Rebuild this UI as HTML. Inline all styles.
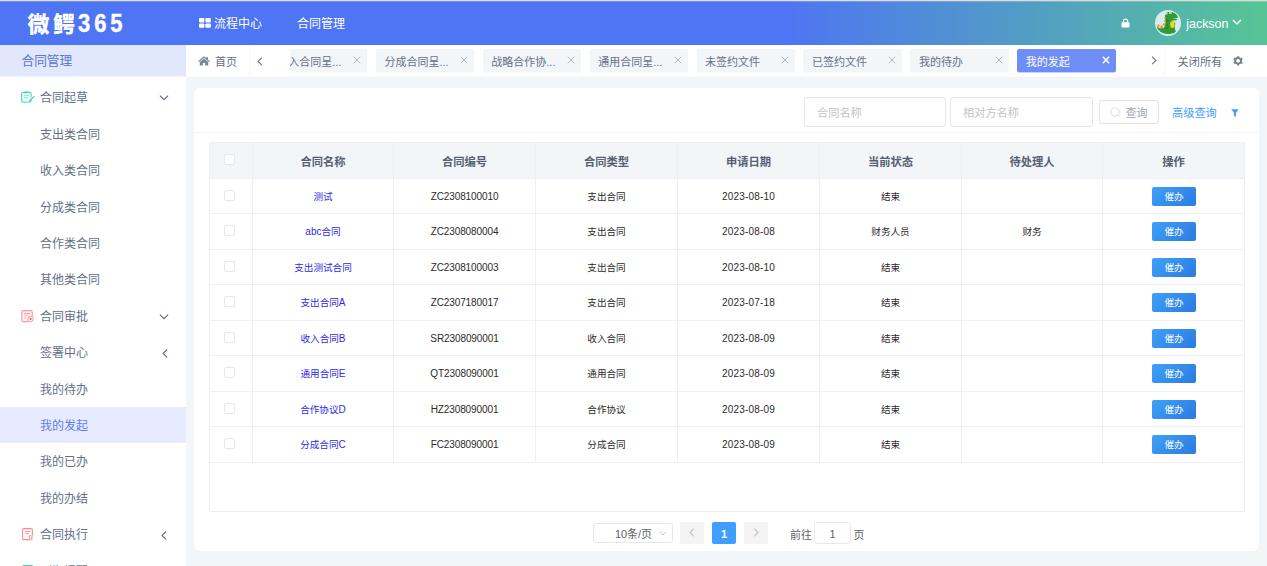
<!DOCTYPE html>
<html lang="zh-CN">
<head>
<meta charset="utf-8">
<title>微鳄365 - 合同管理</title>
<style>
*{box-sizing:border-box;margin:0;padding:0}
html,body{width:1267px;height:566px;overflow:hidden;background:#f3f6f9}
body{font-family:"Liberation Sans","Noto Sans CJK SC",sans-serif;font-size:12px;color:#606266;position:relative}
.abs{position:absolute}
#topline{left:0;top:0;width:1267px;height:1px;background:#dddcdb;box-shadow:0 1px 0 rgba(221,220,219,0.3)}
#header{left:0;top:1px;width:1267px;height:44px;background:linear-gradient(90deg,#4e75f3 0%,#4e75f3 62%,#56c596 100%);color:#fff}
#logo{left:27.5px;top:2px;height:44px;line-height:44px;font-size:22px;font-weight:900;letter-spacing:3.5px;color:#fff;white-space:nowrap}
#lg{display:inline-block;transform:scaleY(1.15);transform-origin:50% 72.5%;letter-spacing:3.9px;-webkit-text-stroke:0.35px #fff;margin-left:-0.5px}
.nav{top:1px;height:44px;line-height:44px;font-size:12px;color:#fff;white-space:nowrap}
#side{left:0;top:45px;width:186px;height:521px;background:#fff;overflow:hidden}
#sidetitle{left:0;top:0;width:186px;height:31px;border-bottom:0;box-shadow:0 1px 0 #f0f3ff;line-height:32.6px;background:#e1e7fd;color:#5877d6;font-size:12.7px;padding-left:21.5px}
.mi{left:0;width:186px;height:36px;line-height:39px;font-size:12px;color:#636f86;white-space:nowrap}
.mi .t{position:absolute;left:40px;top:0}
.mi svg.ic{position:absolute;left:21px}
.mi svg.ar{position:absolute}
.mi.act{background:#e6ebff;color:#5f7bf5}
#tabs{left:186px;top:45px;width:1081px;height:32px;background:linear-gradient(#fff 0,#fff 31px,#f8fafc 31px,#f8fafc 32px)}
.tab{top:4px;height:23px;box-shadow:0 1px 0 #f9fafc;line-height:26px;background:#f3f6f9;border-radius:2px;font-size:11px;color:#667085;white-space:nowrap;overflow:hidden}
.tab .x{position:absolute;right:6.2px;top:7px}
.tab.on{background:#6e8df6;color:#fff;box-shadow:0 1px 0 #c5d1fb}
#cardbg{left:194px;top:88px;width:1065px;height:463px;background:#fff;border-radius:6px}
#card{left:193px;top:88px;width:1066px;height:463px}
#sbar{left:0;top:0;width:1066px;height:45px;border-bottom:1px solid #f2f4f8}
.inp{top:9px;height:30px;width:143px;border:1px solid #e4e7ed;border-radius:3px;background:#fff;line-height:30px;font-size:11.2px;color:#c0c4cc;padding-left:12px}
table{border-collapse:collapse;table-layout:fixed;position:absolute;left:16px;top:54px;width:1035px}
th,td{border:1px solid #eef0f6;text-align:center;font-weight:normal;overflow:hidden;white-space:nowrap}
th{height:36px;background:#f3f6f9;color:#566072;font-size:11.3px;font-weight:bold}
td{height:35px;font-size:10px;letter-spacing:-0.1px;color:#2b2b2b}
tr:nth-child(odd) td{height:36px}
td.c{letter-spacing:0;font-size:9.6px;padding-bottom:1px}
td.lk{color:#2e2be4;letter-spacing:0;font-size:9.6px;padding-bottom:1px}
.cb{display:inline-block;width:11px;height:11px;border:1px solid #e6e8ef;border-radius:2px;background:#fff;vertical-align:middle;position:relative;top:-1.4px;left:-1.5px}
th .cb{top:-2px}
.l{font-size:10px}
td.d{letter-spacing:0.2px}
.btn{display:inline-block;width:44px;height:19px;line-height:20px;border-radius:2px;background:linear-gradient(135deg,#3fa0f8,#2b7be0);color:#fff;font-size:9.6px;letter-spacing:0;vertical-align:middle;margin-left:1px}
</style>
</head>
<body>
<div id="header" class="abs">
  <div id="logo" class="abs">微鳄<span id="lg">365</span></div>
  <svg class="abs" style="left:199px;top:17px" width="12" height="10" viewBox="0 0 12 10"><rect x="0" y="0" width="5.4" height="4.4" rx="0.8" fill="#fff"/><rect x="6.4" y="0" width="5.4" height="4.4" rx="0.8" fill="#fff"/><rect x="0" y="5.4" width="5.4" height="4.4" rx="0.8" fill="#fff"/><rect x="6.4" y="5.4" width="5.4" height="4.4" rx="0.8" fill="#fff"/></svg>
  <div class="abs nav" style="left:214px">流程中心</div>
  <div class="abs nav" style="left:297px">合同管理</div>
  <svg class="abs" style="left:1121px;top:16.8px" width="9" height="10" viewBox="0 0 9 10"><path d="M2.4 4.6V3.2a2.1 2.1 0 0 1 4.2 0V4.6" fill="none" stroke="#fff" stroke-width="1.3"/><rect x="0.5" y="4.2" width="8" height="5.3" rx="0.7" fill="#fff"/></svg>
  <svg class="abs" style="left:1155px;top:9.4px" width="26" height="26" viewBox="0 0 26 26"><circle cx="13" cy="13" r="13" fill="#d6edef"/><path d="M10 4.5C10 2.8 12 1.9 14 2.1 17.2 1.6 21.2 3 22.7 6.4L22.5 7.9 17 8.2 21.9 9 21.5 10.3C19.5 10.7 17.8 10.6 16.9 10.5 18.6 11.8 20.6 13 20.5 14L19.6 15.2C20 18 19.6 20 21 21.3L19.2 23 15 23.9C11 24.6 6 23 3.5 20 2.5 18.8 2 17.5 2.2 16.4 4 18.5 7 19 9 17.4 10.6 16 10.5 12 10.2 9Z" fill="#2f9b33"/><ellipse cx="17.3" cy="14.6" rx="2.2" ry="3.5" fill="#f6d21a"/><circle cx="3.4" cy="15.7" r="1.2" fill="#f58b1e"/><circle cx="6.6" cy="16.9" r="1.3" fill="#f58b1e"/><circle cx="9" cy="14.4" r="1.2" fill="#f58b1e"/><circle cx="10" cy="11.3" r="1" fill="#f58b1e"/><circle cx="10" cy="8" r="0.8" fill="#f58b1e"/><circle cx="11.4" cy="3.8" r="1.2" fill="#fff"/><circle cx="15.4" cy="3" r="1.2" fill="#fff"/><circle cx="11.6" cy="3.9" r="0.5" fill="#334"/><circle cx="15.6" cy="3.1" r="0.5" fill="#334"/><path d="M12 9.5l0.2 2M12.2 13.5l0 2M11.6 17.5l-0.4 1.5" stroke="#1d5e22" stroke-width="0.8"/></svg>
  <div class="abs nav" style="left:1186.3px;top:0.5px;font-size:12.4px">jackson</div>
  <svg class="abs" style="left:1232px;top:18.3px" width="10" height="7" viewBox="0 0 10 7"><path d="M0.9 0.9l4 4 4-4" fill="none" stroke="#fff" stroke-width="1.4"/></svg>
</div>
<div id="topline" class="abs"></div>

<div id="side" class="abs">
  <div id="sidetitle" class="abs">合同管理</div>
  <div class="abs mi" style="top:34px"><svg class="ic" style="top:12px" width="14" height="13" viewBox="0 0 14 13"><rect x="0.6" y="1.3" width="9.6" height="9.9" rx="1.6" fill="#eafaf6" stroke="#62d9c2" stroke-width="1.2"/><rect x="3" y="0.6" width="4.8" height="1.5" fill="#4fcdb4"/><path d="M2.9 4.6h5M2.9 6.8h4" stroke="#8fe6d5" stroke-width="1"/><path d="M6.3 11.8l0.5-2.3 5.5-5.5 1.5 1.5-5.4 5.6z" fill="#fff"/><path d="M7.3 11.2l0.3-1.4 5-5 1 1-4.9 5z" fill="#52d3bb"/></svg><span class="t">合同起草</span><svg class="ar" style="left:159px;top:16px" width="10" height="6" viewBox="0 0 10 6"><path d="M0.9 0.6L5 4.7 9.1 0.6" fill="none" stroke="#5c6a82" stroke-width="1.15"/></svg></div>
  <div class="abs mi" style="top:71px"><span class="t">支出类合同</span></div>
  <div class="abs mi" style="top:107px"><span class="t">收入类合同</span></div>
  <div class="abs mi" style="top:144px"><span class="t">分成类合同</span></div>
  <div class="abs mi" style="top:180px"><span class="t">合作类合同</span></div>
  <div class="abs mi" style="top:216px"><span class="t">其他类合同</span></div>
  <div class="abs mi" style="top:253px"><svg class="ic" style="top:12px" width="14" height="13" viewBox="0 0 14 13"><rect x="0.9" y="0.6" width="10.4" height="11" rx="1.6" fill="#fff5f5" stroke="#ff9a9a" stroke-width="1.2"/><path d="M3.2 3.6h6" stroke="#ff9a9a" stroke-width="1.2"/><path d="M3.2 5.8h3.2M3.2 8h2" stroke="#ffaaaa" stroke-width="1"/><circle cx="9.6" cy="8.9" r="3.3" fill="#fff"/><circle cx="9.6" cy="8.9" r="2.7" fill="#fff" stroke="#ff8f8f" stroke-width="1"/><circle cx="9.6" cy="8.9" r="1.1" fill="#f86060"/></svg><span class="t">合同审批</span><svg class="ar" style="left:159px;top:16px" width="10" height="6" viewBox="0 0 10 6"><path d="M0.9 0.6L5 4.7 9.1 0.6" fill="none" stroke="#5c6a82" stroke-width="1.15"/></svg></div>
  <div class="abs mi" style="top:289px"><span class="t">签署中心</span><svg class="ar" style="left:162px;top:14.6px" width="6" height="10" viewBox="0 0 6 10"><path d="M5.2 0.5L1.1 4.4 5.2 8.3" fill="none" stroke="#5c6a82" stroke-width="1.1"/></svg></div>
  <div class="abs mi" style="top:326px"><span class="t">我的待办</span></div>
  <div class="abs mi act" style="top:362px"><span class="t">我的发起</span></div>
  <div class="abs mi" style="top:398px"><span class="t">我的已办</span></div>
  <div class="abs mi" style="top:435px"><span class="t">我的办结</span></div>
  <div class="abs mi" style="top:471px"><svg class="ic" style="top:12px;left:22px" width="12" height="13" viewBox="0 0 12 13"><rect x="0.6" y="0.6" width="9.8" height="11" rx="1.2" fill="#fff" stroke="#ff8c8c" stroke-width="1.1"/><path d="M2.6 3.6h6M2.6 5.7h4.4" stroke="#ff9a9a" stroke-width="1"/><circle cx="8.8" cy="9.2" r="2.3" fill="#fff"/><circle cx="8.6" cy="9" r="1.5" fill="#fff" stroke="#ff8c8c" stroke-width="1"/></svg><span class="t">合同执行</span><svg class="ar" style="left:161px;top:14.6px" width="6" height="10" viewBox="0 0 6 10"><path d="M5.2 0.5L1.1 4.4 5.2 8.3" fill="none" stroke="#5c6a82" stroke-width="1.1"/></svg></div>
  <div class="abs mi" style="top:508px"><svg class="ic" style="top:12px;left:22px" width="12" height="13" viewBox="0 0 12 13"><rect x="0.3" y="0" width="11" height="12" rx="1.6" fill="#45d6bd"/></svg><span class="t">到期提醒</span></div>
</div>

<div id="tabs" class="abs">
  <svg class="abs" style="left:12px;top:10.5px" width="12" height="10" viewBox="0 0 12 10"><path d="M6 0.2L0.1 5.2l0.8 0.9L6 1.9l5.1 4.2 0.8-0.9L9.9 3.5V0.9H8.4v1.3z" fill="#7d8590"/><path d="M1.8 6.1L6 2.8l4.2 3.3V9.6H7.1V6.9H4.9V9.6H1.8z" fill="#7d8590"/></svg>
  <div class="abs tt" style="left:29px;top:0;line-height:34px;font-size:11px;color:#667085">首页</div>
  <div class="abs" style="left:63px;top:0;width:1px;height:31px;background:#f7f8fa"></div>
  <svg class="abs" style="left:71px;top:11.5px" width="6" height="9" viewBox="0 0 6 9"><path d="M4.9 0.6L1.1 4.4l3.8 3.8" fill="none" stroke="#6c7480" stroke-width="1.15"/></svg>
  <div class="abs tab" style="left:103.7px;width:77.8px"><span style="margin-left:-1.5px">入合同呈...</span><svg class="x" width="8" height="8" viewBox="0 0 8 8"><path d="M0.8 0.8l6.4 6.4M7.2 0.8L0.8 7.2" stroke="#b3b8bf" stroke-width="1" fill="none"/></svg></div>
  <div class="abs tab" style="left:189.8px;width:98.6px"><span style="margin-left:8.6px">分成合同呈...</span><svg class="x" width="8" height="8" viewBox="0 0 8 8"><path d="M0.8 0.8l6.4 6.4M7.2 0.8L0.8 7.2" stroke="#b3b8bf" stroke-width="1" fill="none"/></svg></div>
  <div class="abs tab" style="left:296.7px;width:98.6px"><span style="margin-left:8.6px">战略合作协...</span><svg class="x" width="8" height="8" viewBox="0 0 8 8"><path d="M0.8 0.8l6.4 6.4M7.2 0.8L0.8 7.2" stroke="#b3b8bf" stroke-width="1" fill="none"/></svg></div>
  <div class="abs tab" style="left:403.6px;width:98.6px"><span style="margin-left:8.6px">通用合同呈...</span><svg class="x" width="8" height="8" viewBox="0 0 8 8"><path d="M0.8 0.8l6.4 6.4M7.2 0.8L0.8 7.2" stroke="#b3b8bf" stroke-width="1" fill="none"/></svg></div>
  <div class="abs tab" style="left:510.5px;width:98.6px"><span style="margin-left:8.6px">未签约文件</span><svg class="x" width="8" height="8" viewBox="0 0 8 8"><path d="M0.8 0.8l6.4 6.4M7.2 0.8L0.8 7.2" stroke="#b3b8bf" stroke-width="1" fill="none"/></svg></div>
  <div class="abs tab" style="left:617.4px;width:98.6px"><span style="margin-left:8.6px">已签约文件</span><svg class="x" width="8" height="8" viewBox="0 0 8 8"><path d="M0.8 0.8l6.4 6.4M7.2 0.8L0.8 7.2" stroke="#b3b8bf" stroke-width="1" fill="none"/></svg></div>
  <div class="abs tab" style="left:724.3px;width:98.6px"><span style="margin-left:8.6px">我的待办</span><svg class="x" width="8" height="8" viewBox="0 0 8 8"><path d="M0.8 0.8l6.4 6.4M7.2 0.8L0.8 7.2" stroke="#b3b8bf" stroke-width="1" fill="none"/></svg></div>
  <div class="abs tab on" style="left:831.2px;width:98.6px"><span style="margin-left:8.6px">我的发起</span><svg class="x" width="8" height="8" viewBox="0 0 8 8"><path d="M0.8 0.8l6.4 6.4M7.2 0.8L0.8 7.2" stroke="#fff" stroke-width="1.5" fill="none"/></svg></div>
  <svg class="abs" style="left:964.7px;top:11px" width="6" height="9" viewBox="0 0 6 9"><path d="M1.1 0.6L4.9 4.4 1.1 8.2" fill="none" stroke="#6c7480" stroke-width="1.15"/></svg>
  <div class="abs" style="left:978px;top:0;width:1px;height:31px;background:#f7f8fa"></div>
  <div class="abs tt" style="left:991.5px;top:0;line-height:34px;font-size:11.2px;color:#667085">关闭所有</div>
  <svg class="abs" style="left:1047px;top:11px" width="10.2" height="9.6" viewBox="0 0 11 11" preserveAspectRatio="none"><circle cx="5.5" cy="5.5" r="3.2" fill="none" stroke="#7a828e" stroke-width="2.2"/><path d="M5.5 0.2v2M5.5 8.8v2M0.9 2.8l1.8 1M8.3 7.2l1.8 1M0.9 8.2l1.8-1M8.3 3.8l1.8-1" stroke="#7a828e" stroke-width="2.2"/></svg>
</div>

<div id="cardbg" class="abs"></div>
<div id="card" class="abs">
  <div id="sbar" class="abs">
    <div class="abs inp" style="left:611px;width:142px">合同名称</div>
    <div class="abs inp" style="left:757px">相对方名称</div>
    <div class="abs" style="left:906px;top:12px;width:60px;height:24px;border:1px solid #ebdedb;border-radius:3px;line-height:25px;font-size:11px;color:#a3a7ae;padding-left:25.5px">查询</div>
    <svg class="abs" style="left:917px;top:19px" width="11" height="11" viewBox="0 0 11 11"><circle cx="5" cy="5" r="4.2" fill="none" stroke="#e6d8d3" stroke-width="1"/><path d="M8 8l2 2" stroke="#e6d8d3" stroke-width="1"/></svg>
    <div class="abs" style="left:979px;top:2px;line-height:46px;font-size:11.2px;color:#409eff">高级查询</div>
    <svg class="abs" style="left:1037.5px;top:21px" width="8" height="8" viewBox="0 0 8 8"><path d="M0.2 0.3h7.6L5 3.8V7.8L3 6.7V3.8z" fill="#409eff"/></svg>
  </div>
  <table>
    <colgroup><col style="width:43px"><col style="width:141px"><col style="width:142px"><col style="width:142px"><col style="width:142px"><col style="width:142px"><col style="width:141px"><col style="width:142px"></colgroup>
    <tr><th><span class="cb"></span></th><th>合同名称</th><th>合同编号</th><th>合同类型</th><th>申请日期</th><th>当前状态</th><th>待处理人</th><th>操作</th></tr>
    <tr><td><span class="cb"></span></td><td class="lk">测试</td><td>ZC2308100010</td><td class="c">支出合同</td><td class="d">2023-08-10</td><td class="c">结束</td><td></td><td><span class="btn">催办</span></td></tr>
    <tr><td><span class="cb"></span></td><td class="lk"><span class="l">abc</span>合同</td><td>ZC2308080004</td><td class="c">支出合同</td><td class="d">2023-08-08</td><td class="c">财务人员</td><td class="c">财务</td><td><span class="btn">催办</span></td></tr>
    <tr><td><span class="cb"></span></td><td class="lk">支出测试合同</td><td>ZC2308100003</td><td class="c">支出合同</td><td class="d">2023-08-10</td><td class="c">结束</td><td></td><td><span class="btn">催办</span></td></tr>
    <tr><td><span class="cb"></span></td><td class="lk">支出合同<span class="l">A</span></td><td>ZC2307180017</td><td class="c">支出合同</td><td class="d">2023-07-18</td><td class="c">结束</td><td></td><td><span class="btn">催办</span></td></tr>
    <tr><td><span class="cb"></span></td><td class="lk">收入合同<span class="l">B</span></td><td>SR2308090001</td><td class="c">收入合同</td><td class="d">2023-08-09</td><td class="c">结束</td><td></td><td><span class="btn">催办</span></td></tr>
    <tr><td><span class="cb"></span></td><td class="lk">通用合同<span class="l">E</span></td><td>QT2308090001</td><td class="c">通用合同</td><td class="d">2023-08-09</td><td class="c">结束</td><td></td><td><span class="btn">催办</span></td></tr>
    <tr><td><span class="cb"></span></td><td class="lk">合作协议<span class="l">D</span></td><td>HZ2308090001</td><td class="c">合作协议</td><td class="d">2023-08-09</td><td class="c">结束</td><td></td><td><span class="btn">催办</span></td></tr>
    <tr><td><span class="cb"></span></td><td class="lk">分成合同<span class="l">C</span></td><td>FC2308090001</td><td class="c">分成合同</td><td class="d">2023-08-09</td><td class="c">结束</td><td></td><td><span class="btn">催办</span></td></tr>
  </table>
  <div class="abs" id="tfoot" style="left:16px;top:374px;width:1036px;height:50px;border:1px solid #ebeef5;border-top:none"></div>
  <div id="pager" class="abs" style="left:0;top:425px;width:1066px;height:39px">
    <div class="abs" style="left:400px;top:10px;width:80px;height:20px;border:1px solid #e4e7ed;border-radius:3px;line-height:20px;font-size:10.9px;color:#606266;padding-left:21px">10条/页</div>
    <svg class="abs" style="left:466px;top:18px" width="8" height="5" viewBox="0 0 8 5"><path d="M0.8 0.8L4 4l3.2-3.2" fill="none" stroke="#c0c4cc" stroke-width="1"/></svg>
    <div class="abs" style="left:487px;top:9.3px;width:24px;height:21.5px;background:#f4f4f5;border-radius:2px"></div>
    <svg class="abs" style="left:496px;top:15px" width="6" height="9" viewBox="0 0 6 9"><path d="M4.8 0.7L1 4.5l3.8 3.8" fill="none" stroke="#c0c4cc" stroke-width="1.1"/></svg>
    <div class="abs" style="left:519px;top:9.3px;width:24px;height:21.5px;background:#409eff;border-radius:2px;color:#fff;font-size:11px;font-weight:bold;text-align:center;line-height:24px">1</div>
    <div class="abs" style="left:550.8px;top:9.3px;width:24px;height:21.5px;background:#f4f4f5;border-radius:2px"></div>
    <svg class="abs" style="left:559.5px;top:15px" width="6" height="9" viewBox="0 0 6 9"><path d="M1.2 0.7L5 4.5 1.2 8.3" fill="none" stroke="#c0c4cc" stroke-width="1.1"/></svg>
    <div class="abs" style="left:597px;top:1.5px;line-height:40px;font-size:10.9px;color:#606266">前往</div>
    <div class="abs" style="left:621px;top:9px;width:37px;height:22px;border:1px solid #e7e9ef;border-radius:3px;text-align:center;line-height:23px;font-size:11px;color:#606266">1</div>
    <div class="abs" style="left:660.5px;top:1.5px;line-height:40px;font-size:10.9px;color:#606266">页</div>
  </div>
</div>
</body>
</html>
